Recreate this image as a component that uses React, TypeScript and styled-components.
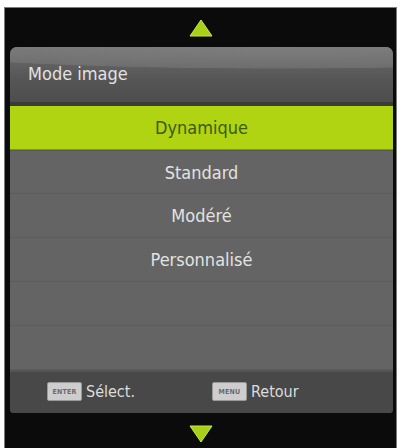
import React from 'react';
import styled, { createGlobalStyle } from 'styled-components';

const GlobalStyle = createGlobalStyle`
  html, body {
    margin: 0;
    padding: 0;
    background: #ffffff;
  }
  body {
    font-family: "DejaVu Sans Condensed", "DejaVu Sans", sans-serif;
    font-stretch: condensed;
  }
`;

const Screen = styled.div`
  width: 401px;
  height: 448px;
  overflow: hidden;
  padding: 7px 4px 0 4px;
  box-sizing: border-box;
`;

const Frame = styled.div`
  display: flex;
  flex-direction: column;
  height: 450px;
  background: #0b0b0b;
  border: 1px solid #7c7c7c;
  border-bottom: none;
  box-sizing: border-box;
`;

const ArrowBar = styled.div<{ $height: number; $offset?: number }>`
  display: flex;
  align-items: center;
  justify-content: center;
  height: ${(p) => p.$height}px;
  padding-top: ${(p) => p.$offset ?? 0}px;
  box-sizing: border-box;
  flex-shrink: 0;
`;

const Panel = styled.div`
  display: flex;
  flex-direction: column;
  margin: 0 3px 0 5px;
  border-radius: 7px 7px 4px 4px;
  overflow: hidden;
  background: #626262;
`;

const Header = styled.div`
  height: 59px;
  display: flex;
  align-items: center;
  padding: 0 0 2px 18px;
  box-sizing: border-box;
  color: #e2e2e2;
  font-size: 18px;
  background:
    radial-gradient(ellipse 140% 55% at 70% 0%, rgba(140, 140, 140, 0.55) 0%, rgba(140, 140, 140, 0.35) 70%, rgba(0, 0, 0, 0) 72%),
    linear-gradient(#6c6c6c, #555555 60%, #4e4e4e);
  border-bottom: 4px solid #3a3a3a;
`;

const List = styled.div`
  display: flex;
  flex-direction: column;
`;

const Row = styled.div<{ $active?: boolean }>`
  height: 44px;
  display: flex;
  align-items: center;
  justify-content: center;
  font-size: 18px;
  box-sizing: border-box;
  color: ${(p) => (p.$active ? '#3f5a0c' : '#e2e2e2')};
  background: ${(p) => (p.$active ? '#b0d312' : '#646464')};
  border-bottom: 1px solid ${(p) => (p.$active ? '#7f9a14' : '#5c5c5c')};
  &:nth-child(2) { border-top: 1px solid #585858; }
`;

const Footer = styled.div`
  height: 43px;
  display: flex;
  align-items: center;
  padding: 0 0 2px 37px;
  background: #484848;
  border-top: 2px solid #555555;
  box-sizing: border-box;
`;

const Hint = styled.div<{ $width: number }>`
  display: flex;
  align-items: center;
  gap: 4px;
  width: ${(p) => p.$width}px;
  color: #dcdcdc;
  font-size: 16px;
`;

const Key = styled.span`
  display: inline-flex;
  align-items: center;
  justify-content: center;
  width: 35px;
  height: 19px;
  background: #cdcdcd;
  border: 1px solid #9a9a9a;
  border-radius: 2px;
  box-sizing: border-box;
  color: #6a6a6a;
  font-family: "DejaVu Sans", sans-serif;
  font-size: 7px;
  font-weight: bold;
  letter-spacing: 0.2px;
`;

const Triangle: React.FC<{ down?: boolean }> = ({ down }) => (
  <svg width="24" height="18" viewBox="0 0 24 18">
    <polygon
      points={down ? '1,1 23,1 12,17' : '12,1 23,17 1,17'}
      fill="#a9d018"
      stroke="#c6e64a"
      strokeWidth="1"
      strokeLinejoin="round"
    />
  </svg>
);

const modes = ['Dynamique', 'Standard', 'Modéré', 'Personnalisé', '', ''];

const App: React.FC = () => {
  return (
    <Screen>
      <GlobalStyle />
      <Frame>
        <ArrowBar $height={39}>
          <Triangle />
        </ArrowBar>

        <Panel>
          <Header>Mode image</Header>
          <List>
            {modes.map((mode, idx) => (
              <Row key={idx} $active={idx === 0}>
                {mode}
              </Row>
            ))}
          </List>
          <Footer>
            <Hint $width={165}>
              <Key>ENTER</Key>
              Sélect.
            </Hint>
            <Hint $width={120}>
              <Key>MENU</Key>
              Retour
            </Hint>
          </Footer>
        </Panel>

        <ArrowBar $height={36} $offset={6}>
          <Triangle down />
        </ArrowBar>
      </Frame>
    </Screen>
  );
};

export default App;
